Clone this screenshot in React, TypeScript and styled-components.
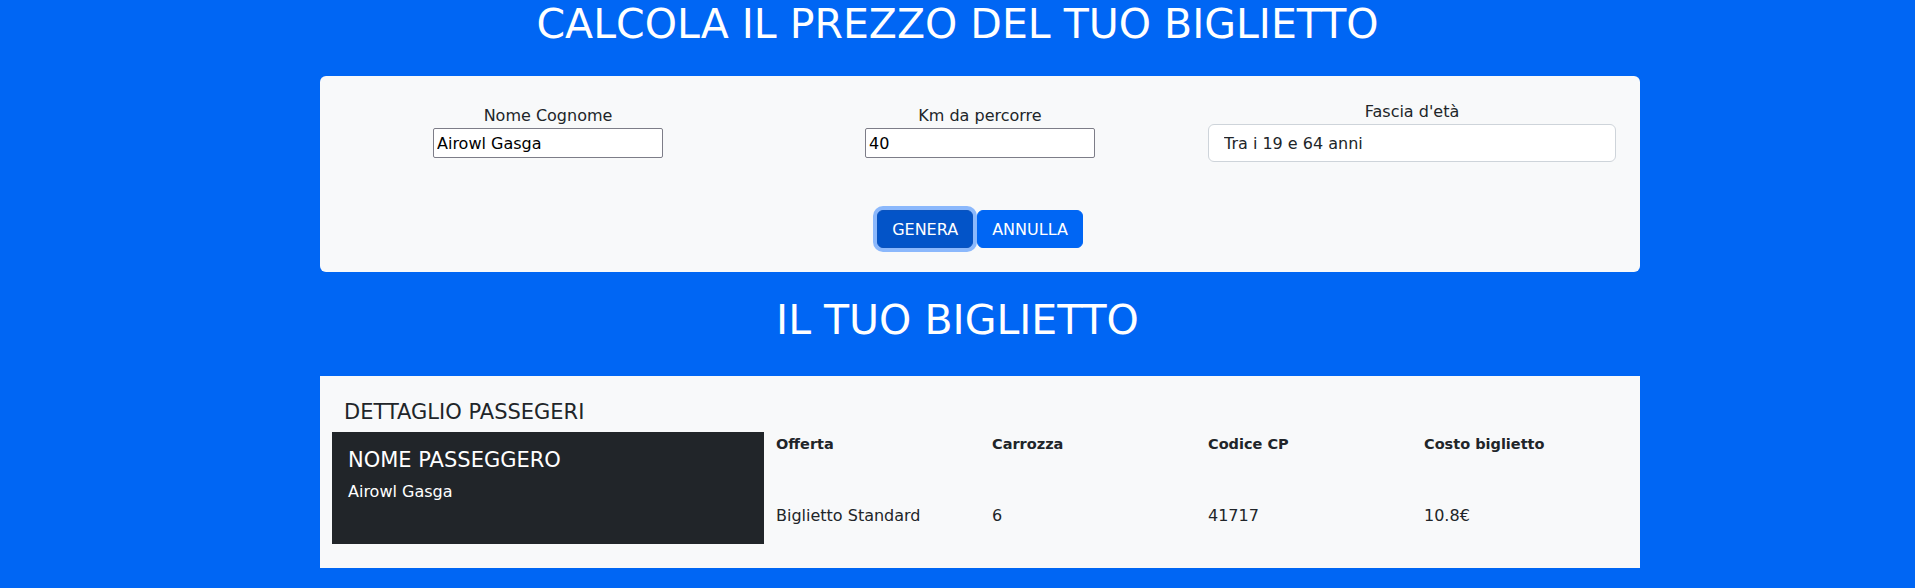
import styled, { createGlobalStyle } from "styled-components";

const GlobalStyle = createGlobalStyle`
    body {
        margin: 0;
        background: #0066f4;
        font-family: "DejaVu Sans", "Noto Sans", sans-serif;
        color: #212529;
    }
`;

const details = [
    { label: "Offerta", value: "Biglietto Standard" },
    { label: "Carrozza", value: "6" },
    { label: "Codice CP", value: "41717" },
    { label: "Costo biglietto", value: "10.8€" },
];

const App = () => {
    return (
        <>
            <GlobalStyle />
            <Page>
                <Title $first>CALCOLA IL PREZZO DEL TUO BIGLIETTO</Title>
                <Panel $rounded>
                    <FieldRow>
                        <Field>
                            <Label>Nome Cognome</Label>
                            <TextInput defaultValue="Airowl Gasga" />
                        </Field>
                        <Field>
                            <Label>Km da percorre</Label>
                            <TextInput defaultValue="40" />
                        </Field>
                        <Field>
                            <Label>Fascia d'età</Label>
                            <Select defaultValue="std">
                                <option value="std">Tra i 19 e 64 anni</option>
                                <option value="min">Minorenne</option>
                                <option value="over">Over 65</option>
                            </Select>
                        </Field>
                    </FieldRow>
                    <Actions>
                        <Button $focused>GENERA</Button>
                        <Button>ANNULLA</Button>
                    </Actions>
                </Panel>

                <Title>IL TUO BIGLIETTO</Title>
                <Panel>
                    <Heading>DETTAGLIO PASSEGERI</Heading>
                    <TicketRow>
                        <Passenger>
                            <Heading $light>NOME PASSEGGERO</Heading>
                            <PassengerName>Airowl Gasga</PassengerName>
                        </Passenger>
                        <Details>
                            {details.map((d) => (
                                <Cell key={d.label} $bold>{d.label}</Cell>
                            ))}
                            {details.map((d) => (
                                <Cell key={d.label + "-v"}>{d.value}</Cell>
                            ))}
                        </Details>
                    </TicketRow>
                </Panel>
            </Page>
        </>
    );
};
export default App;

const Page = styled.div`
    display: flex;
    flex-direction: column;
    padding-bottom: 20px;
`;

const Title = styled.h1<{ $first?: boolean }>`
    margin: ${(p) => (p.$first ? "0 0 28px" : "24px 0 32px")};
    font-size: 41px;
    font-weight: 400;
    line-height: 48px;
    color: #ffffff;
    text-align: center;
`;

const Panel = styled.section<{ $rounded?: boolean }>`
    width: 1320px;
    box-sizing: border-box;
    margin-left: 320px;
    padding: 24px;
    background: #f8f9fa;
    border-radius: ${(p) => (p.$rounded ? "6px" : "0")};
`;

const FieldRow = styled.div`
    display: grid;
    grid-template-columns: repeat(3, 1fr);
    align-items: center;
    margin: 0 -12px;
`;

const Field = styled.div`
    display: flex;
    flex-direction: column;
    align-items: center;
    padding: 0 12px;
`;

const Label = styled.label`
    font-size: 16px;
    line-height: 24px;
`;

const TextInput = styled.input`
    width: 230px;
    height: 30px;
    box-sizing: border-box;
    padding: 0 3px;
    border: 1px solid #7d7d88;
    border-radius: 2px;
    font-family: inherit;
    font-size: 16px;
    color: #000;
    background: #fff;
`;

const Select = styled.select`
    width: 100%;
    height: 38px;
    box-sizing: border-box;
    padding: 0 12px 0 15px;
    border: 1px solid #ced4da;
    border-radius: 6px;
    appearance: none;
    background: #fff;
    font-family: inherit;
    font-size: 16px;
    color: #212529;
`;

const Actions = styled.div`
    display: flex;
    justify-content: center;
    gap: 4px;
    margin-top: 48px;
`;

const Button = styled.button<{ $focused?: boolean }>`
    height: 38px;
    padding: 0 14px;
    border: 1px solid ${(p) => (p.$focused ? "#0a53be" : "#0066f4")};
    border-radius: 6px;
    background: ${(p) => (p.$focused ? "#0354c8" : "#0066f4")};
    color: #fff;
    font-family: inherit;
    font-size: 16px;
    box-shadow: ${(p) => (p.$focused ? "0 0 0 4px rgba(49, 132, 253, 0.55)" : "none")};
`;

const Heading = styled.h5<{ $light?: boolean }>`
    margin: 0 0 8px;
    font-size: 21px;
    font-weight: 400;
    line-height: 24px;
    color: ${(p) => (p.$light ? "#ffffff" : "#212529")};
`;

const TicketRow = styled.div`
    display: grid;
    grid-template-columns: 1fr 2fr;
    margin: 0 -12px;
`;

const Passenger = styled.div`
    padding: 16px;
    background: #212529;
    color: #fff;
`;

const PassengerName = styled.p`
    margin: 0;
    font-size: 16px;
    line-height: 24px;
`;

const Details = styled.div`
    display: grid;
    grid-template-columns: repeat(4, 1fr);
    grid-template-rows: 24px 24px;
    row-gap: 48px;
    padding-bottom: 16px;
`;

const Cell = styled.div<{ $bold?: boolean }>`
    padding: 0 12px;
    font-size: ${(p) => (p.$bold ? "14.5px" : "16px")};
    font-weight: ${(p) => (p.$bold ? 700 : 400)};
    line-height: 24px;
`;
